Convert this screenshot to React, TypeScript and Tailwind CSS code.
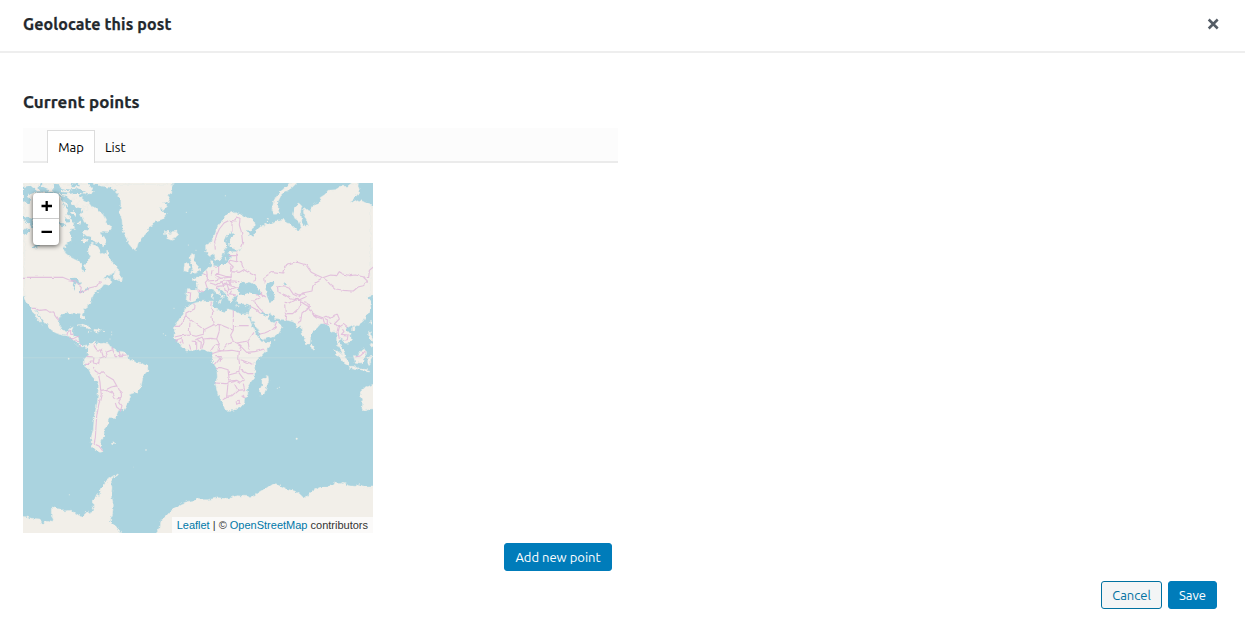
import React from 'react';

const NORTH_AMERICA =
  'M9 8 L203 8 L214 22 L220 34 L205 42 L190 38 L176 44 L190 58 L205 66 L214 78 L232 84 L240 96 L252 104 L260 118 L256 128 L272 140 L268 154 L248 152 L240 160 L256 172 L260 184 L250 196 L236 188 L222 184 L210 168 L196 166 L184 156 L198 148 L204 136 L192 124 L184 106 L170 100 L160 104 L168 118 L160 130 L164 144 L150 146 L152 160 L164 172 L150 182 L140 190 L130 206 L136 218 L150 230 L166 238 L182 246 L184 264 L190 276 L196 272 L194 252 L204 244 L210 232 L204 214 L206 200 L216 188 L230 196 L236 202 L240 216 L250 224 L262 212 L266 228 L274 242 L290 258 L296 268 L284 276 L268 284 L250 292 L254 298 L270 292 L272 304 L266 318 L252 312 L244 322 L230 332 L220 344 L214 360 L212 370 L190 388 L188 400 L193 418 L185 416 L179 398 L160 401 L140 397 L122 405 L117 420 L118 436 L125 448 L142 453 L150 443 L162 440 L158 456 L161 469 L175 472 L178 488 L188 496 L200 494 L208 502 L200 502 L180 498 L166 484 L146 468 L130 465 L108 458 L90 448 L80 432 L60 408 L50 390 L46 388 L52 403 L64 420 L66 432 L56 422 L46 406 L34 384 L20 370 L12 352 L9 346Z';
const SOUTH_AMERICA =
  'M204 502 L212 488 L228 482 L236 490 L252 488 L270 492 L276 504 L290 512 L310 514 L322 524 L324 534 L346 545 L366 547 L383 558 L384 570 L370 586 L365 610 L360 628 L348 636 L330 642 L325 664 L312 688 L296 690 L292 698 L290 706 L285 714 L265 715 L263 734 L250 750 L255 764 L243 778 L240 794 L250 814 L240 816 L225 810 L214 796 L213 774 L220 746 L223 706 L232 666 L236 612 L220 596 L205 565 L190 551 L190 536 L203 524 L208 506Z';
const GREENLAND =
  'M223 8 L240 16 L276 22 L292 38 L302 54 L303 74 L298 98 L306 118 L308 150 L316 166 L324 188 L336 202 L348 212 L354 190 L364 174 L380 158 L388 140 L398 134 L402 126 L428 116 L442 100 L424 92 L418 82 L432 88 L442 78 L430 66 L444 68 L448 54 L442 46 L454 40 L458 22 L454 8Z';
const EURASIA =
  'M1060 78 L1046 72 L1026 62 L1012 58 L992 68 L996 60 L1012 44 L1018 28 L1012 8 L992 10 L982 18 L962 18 L946 28 L924 30 L916 42 L900 52 L904 62 L882 72 L876 84 L868 92 L856 82 L850 92 L852 104 L860 122 L866 136 L856 138 L846 124 L842 92 L846 78 L836 68 L830 72 L824 88 L820 102 L824 114 L838 124 L844 140 L838 150 L830 148 L812 130 L800 128 L790 114 L784 122 L766 122 L752 130 L738 130 L724 140 L706 154 L700 174 L690 168 L686 158 L674 150 L690 150 L706 138 L704 126 L688 114 L672 108 L660 98 L650 104 L640 94 L622 102 L608 118 L592 142 L584 164 L574 184 L557 194 L557 214 L568 228 L582 218 L586 236 L598 240 L608 226 L612 208 L622 196 L614 184 L620 166 L636 154 L642 162 L628 180 L630 200 L648 208 L664 202 L648 214 L634 214 L626 218 L636 230 L624 246 L598 258 L580 256 L580 238 L572 238 L574 258 L560 266 L548 282 L535 290 L520 294 L520 300 L532 312 L533 328 L502 328 L500 346 L498 362 L510 365 L526 362 L534 350 L538 338 L552 330 L566 324 L580 328 L590 338 L606 348 L604 358 L612 348 L602 338 L594 324 L602 326 L618 342 L624 356 L632 370 L638 356 L650 346 L652 354 L646 362 L658 370 L678 370 L690 372 L690 388 L686 400 L696 420 L712 446 L720 468 L728 478 L752 470 L774 462 L788 440 L782 430 L768 422 L764 432 L752 426 L744 406 L748 398 L766 414 L800 420 L820 424 L832 440 L842 436 L848 466 L860 494 L870 490 L872 462 L888 446 L902 430 L918 430 L926 438 L932 456 L944 454 L950 466 L950 490 L962 508 L970 532 L976 528 L970 510 L956 484 L960 474 L972 480 L980 494 L994 478 L992 462 L978 446 L982 440 L996 434 L1010 438 L1030 422 L1044 400 L1052 380 L1050 360 L1060 350Z';
const AFRICA =
  'M506 376 L524 368 L546 363 L580 362 L576 374 L582 384 L600 390 L610 398 L620 386 L640 390 L664 402 L682 400 L686 410 L694 430 L704 450 L712 468 L724 484 L750 486 L750 498 L722 528 L704 546 L704 564 L704 590 L690 608 L680 624 L684 642 L674 654 L672 668 L660 682 L640 690 L616 690 L608 668 L594 640 L586 610 L592 590 L590 564 L576 542 L578 522 L564 512 L544 506 L520 510 L500 512 L484 500 L472 482 L462 470 L464 440 L478 416 L490 402 L494 388Z';
const ANTARCTICA_WEST =
  'M0 1008 L22 1010 L34 1014 L60 1016 L68 1032 L76 1022 L98 1026 L100 1014 L94 1004 L94 984 L110 982 L122 984 L130 992 L154 990 L166 1000 L188 1010 L194 998 L204 992 L208 1000 L222 994 L216 982 L224 974 L216 966 L224 956 L230 942 L238 946 L244 926 L252 914 L262 898 L280 886 L296 880 L292 886 L276 894 L270 904 L276 920 L274 948 L280 974 L278 1000 L270 1024 L290 1040 L310 1070 L0 1070Z';
const ANTARCTICA_EAST =
  'M400 1070 L420 1044 L424 1016 L436 1010 L452 992 L474 980 L482 972 L500 964 L522 960 L532 952 L542 958 L564 958 L596 952 L610 954 L628 954 L652 946 L672 948 L678 944 L690 952 L704 944 L722 932 L738 924 L752 914 L768 910 L790 924 L824 932 L840 942 L852 954 L864 946 L876 932 L902 920 L914 918 L942 916 L946 900 L956 910 L972 906 L986 916 L1006 918 L1016 912 L1030 920 L1070 920 L1070 1070Z';

const ISLANDS = [
  'M0 0H206V12H0Z M0 12H14V350H0Z M220 0H462V12H220Z M1052 76H1074V352H1052Z M994 0H1016V12H994Z',
  'M433 154 L442 152 L448 160 L458 154 L470 152 L476 160 L468 174 L454 180 L440 174 L444 168 L434 164Z',
  'M512 224 L524 222 L522 234 L524 246 L536 260 L540 272 L526 278 L510 280 L520 270 L514 266 L520 256 L512 246 L508 234Z',
  'M494 252 L506 248 L508 262 L504 272 L492 276 L492 264Z',
  'M764 102 L756 88 L760 64 L772 42 L790 26 L812 8 L832 6 L816 22 L796 34 L782 48 L774 64 L774 84 L780 100Z',
  'M282 282 L290 268 L300 278 L307 292 L306 302 L294 300 L284 296Z',
  'M152 58 L166 52 L176 62 L172 76 L158 72Z',
  'M188 76 L202 76 L204 90 L192 92Z',
  'M174 434 L188 431 L204 438 L214 446 L202 445 L190 438 L176 437Z',
  'M222 447 L238 448 L242 453 L230 456 L222 452Z',
  'M201 453 L211 454 L208 457Z M249 453 L256 453 L254 456 L249 456Z',
  'M726 598 L744 586 L746 600 L740 620 L732 642 L722 644 L718 632 L726 614Z',
  'M875 492 L882 498 L880 507 L874 504Z',
  'M940 508 L952 512 L970 526 L984 540 L986 556 L974 550 L960 532Z',
  'M984 558 L1000 558 L1016 564 L1010 568 L988 564Z M1020 566 L1030 566 L1050 570 L1048 575 L1022 571Z',
  'M1000 526 L1012 526 L1024 510 L1034 504 L1040 516 L1032 538 L1024 548 L1006 546Z',
  'M1044 530 L1060 528 L1052 536 L1052 550 L1047 556 L1044 546 L1042 538Z M1046 452 L1054 454 L1054 468 L1060 480 L1052 478 L1046 466Z',
  'M1046 494 L1060 486 L1060 498 L1054 500Z M998 440 L1006 438 L1004 450 L998 450Z M1048 424 L1054 420 L1053 434Z',
  'M1020 636 L1034 622 L1050 616 L1070 606 L1070 682 L1046 688 L1032 692 L1026 686 L1028 664 L1022 650Z',
  'M274 789 L284 787 L288 791 L276 793Z',
  'M592 364 L604 362 L602 369Z M574 342 L579 340 L580 354 L574 354Z M646 376 L658 377 L656 379Z M676 378 L684 376 L680 380Z',
  'M612 236 L617 230 L616 240Z M740 116 L746 118 L742 124Z M724 134 L732 136 L728 144Z',
];

const WATERS = [
  'M9 20 L30 16 L46 24 L62 16 L84 26 L110 22 L140 30 L170 24 L194 30 L188 38 L160 38 L140 42 L112 40 L80 38 L50 34 L24 44 L32 60 L28 74 L9 60Z',
  'M100 10 L116 12 L124 26 L108 28Z M58 8 L68 8 L64 20Z M150 8 L176 10 L180 18 L156 18Z',
  'M118 44 L136 46 L150 58 L156 74 L166 80 L184 84 L190 96 L176 104 L168 122 L160 128 L152 112 L140 104 L144 88 L132 76 L126 60Z',
  'M9 104 L28 112 L42 118 L36 132 L44 140 L36 144 L28 130 L9 118Z',
  'M9 152 L20 144 L32 148 L24 158 L10 164Z M36 202 L48 192 L58 194 L46 204Z',
  'M116 124 L132 126 L136 138 L122 136Z M134 108 L146 116 L148 130 L138 126Z',
  'M164 110 L182 108 L190 128 L204 132 L208 142 L192 156 L178 154 L166 144Z',
  'M148 154 L160 152 L158 162 L170 172 L184 172 L196 182 L208 190 L196 208 L180 200 L168 190 L156 186Z',
  'M144 294 L166 292 L182 306 L180 316 L172 306 L166 312 L162 332 L158 324 L164 306 L152 300Z',
  'M178 332 L192 330 L188 338 L178 338Z M194 326 L208 322 L204 328 L196 330Z',
  'M654 330 L658 312 L668 304 L680 312 L692 306 L702 312 L716 326 L726 340 L708 342 L690 336 L674 342 L658 344Z',
  'M735 320 L742 308 L758 304 L762 312 L752 322 L758 332 L764 350 L762 362 L748 364 L742 350 L740 338Z',
  'M720 400 L730 396 L744 404 L740 410Z M788 312 L798 306 L796 316Z',
  'M228 484 L233 484 L232 496 L228 494Z',
  'M1040 348 L1060 344 L1056 358 L1050 362Z',
];

const BORDERS = [
  // North and Central America
  'M9 291 L128 291 L146 298 L166 302 L184 322 L180 338 L198 330 L210 322 L230 318 L238 304 L246 306',
  'M36 384 L48 384 L60 390 L78 388 L90 396 L100 394 L108 406 L118 420',
  'M140 466 L144 454 L152 450 L152 462 L160 462 M148 470 L158 476 L174 468 M164 482 L178 484 M182 492 L180 500',
  // South America
  'M228 484 L222 496 L230 508 L244 510 L250 530 L238 534 L236 552 L220 548 L222 530 L200 528 M192 552 L204 552 L212 542 L222 542 M220 560 L228 576 L240 580 L246 574 L262 588 L280 598 L290 616 L274 620 L258 628 L242 630 L240 606 L236 584 M250 530 L262 526 L258 516 L278 508 L276 500 M278 508 L286 526 L300 526 L310 520 M298 512 L300 526 L320 524 M242 630 L244 642 L236 674 L230 710 L228 740 L226 772 L222 790 L238 798 L248 812 M290 616 L294 628 L304 638 L304 652 L290 656 M258 630 L280 638 L286 656 M286 668 L290 680 L302 690 L306 676 L296 664 L304 652',
  // Scandinavia and eastern Europe
  'M586 208 L584 184 L590 164 L598 146 L612 128 L628 120 L636 126 L636 154 M628 120 L646 122 L648 110 L660 114 L658 134 L664 154 L668 186 L662 200 M626 226 L646 226 L650 214 L650 244 L630 240 L626 246 L640 260 L632 270 M650 244 L664 244 L672 268 L658 276 L632 274 M672 268 L688 278 L706 286 L702 306',
  // Central Europe and the Balkans
  'M502 336 L512 338 L510 362 M532 328 L552 334 M550 280 L562 286 L562 300 L556 306 L562 324 M562 286 L560 272 M596 258 L596 282 L586 284 L602 294 L584 300 L564 302 M596 282 L616 288 L634 290 L632 258 M602 294 L618 292 L634 290 L628 300 L606 304 L590 314 L570 308 M606 304 L610 316 L594 318 L592 326 M610 316 L620 310 L632 316 L626 302 L642 302 L658 304 M610 316 L612 330 L622 334 L630 350 M620 310 L626 326 L618 332 M632 316 L656 324 L636 328 L630 340 L648 344 M626 326 L636 328 M576 270 L574 282 M584 258 L590 262',
  // Africa
  'M526 370 L524 384 L498 398 L498 408 L478 438 L464 438 M498 408 L552 448 L580 434 L576 410 L578 396 L572 380 L574 364 M580 434 L598 432 L640 450 L640 390 M640 436 L686 436 M510 424 L508 450 L512 464 L480 466 L464 470 M552 448 L550 462 L528 468 L512 464 M550 476 L570 474 L590 476 L598 452 L598 432 M508 490 L512 508 M512 482 L530 484 L530 508 M542 506 L544 486 L530 478 L546 470 L552 482 L546 504 M590 476 L598 490 L580 500 L572 512 M598 490 L594 510 L604 512 L618 496 L640 484 L632 464 L640 450 M604 512 L588 516 L576 520 M604 512 L636 510 L658 514 L662 498 L640 484 L650 488 L684 482 L702 456 M662 498 L680 516 L704 514 L734 506 M684 482 L688 508 M658 514 L656 534 L660 560 L656 576 L640 580 L626 584 L624 568 L604 562 L590 562 M594 524 L600 534 L586 552 M586 526 L604 526 L600 548 M662 538 L700 552 M658 566 L684 580 L700 580 M656 576 L672 598 L660 606 L650 600 L628 602 L626 584 M586 608 L618 610 L650 602 M624 612 L620 648 L608 660 M620 648 L636 646 L654 630 L644 612 M654 630 L674 628 L670 610 M648 662 L658 660 L658 668 L650 672Z M666 648 L670 642 L672 652Z M466 480 L484 474 L490 490 M478 490 L484 484',
  // Middle East
  'M690 362 L706 362 L716 382 L730 396 M690 378 L706 386 L722 400 M716 462 L734 458 L756 448 L770 438 M770 424 L762 444 M706 360 L720 352 L708 342 M720 342 L738 350 M728 350 L724 338 M794 372 L796 398 L800 408 L798 420 M794 366 L810 368 L828 358 L842 360 M800 400 L818 400 L836 384 L842 364 L868 380 L846 398 L842 422 L832 428',
  // Central Asia
  'M736 306 L734 290 L758 274 L788 278 L794 258 L812 252 L832 246 L858 254 L874 276 L890 284 L908 292 L888 304 L878 318 L876 332 L848 338 L836 350 L820 342 L808 324 L788 316 L772 320 L774 334 M908 292 L932 284 L950 286 L958 274 L968 280 L990 286 L1006 284 L1032 290 L1046 288 L1048 270 L1060 260 M908 292 L920 300 L930 312 L948 326 L970 330 L1000 332 L1014 320 L1030 316 L1044 304 L1030 290 M772 334 L796 344 L814 356 L832 358 M824 338 L836 344 L852 340 L856 350 L836 360 L826 354',
  // South and South-East Asia
  'M842 362 L858 366 L868 372 L866 390 L876 396 L886 404 L908 412 L918 408 L930 414 L944 404 L952 402 L958 416 L946 428 L958 440 L954 456 L958 476 M908 412 L912 428 L922 432 L922 418 L912 414 M958 440 L970 432 L982 442 M966 444 L972 454 L964 462 L984 464 L982 478 L972 480 M1006 530 L1022 526 L1034 514 M876 400 L890 410 L908 416 M926 422 L936 430',
];

const SPECKS: Array<[number, number, number]> = [
  [146, 535, 2.5], [830, 775, 3], [378, 809, 2.5], [505, 194, 1.5], [528, 210, 1.5], [499, 96, 1.5],
  [616, 46, 1.5], [430, 460, 1.5], [437, 465, 1.5], [462, 384, 1.5], [764, 479, 2], [772, 624, 1.5],
  [778, 621, 1.5], [275, 455, 1.5], [275, 463, 1.5], [270, 476, 1.5], [340, 860, 1], [148, 943, 1.5],
];

function WorldMap() {
  return (
    <svg viewBox="9 8 1050 1050" className="block size-[350px] bg-[#aad3df]" aria-hidden="true">
      <defs>
        <filter id="coast" filterUnits="userSpaceOnUse" x="-10" y="-10" width="1090" height="1090" colorInterpolationFilters="sRGB">
          <feTurbulence type="fractalNoise" baseFrequency="0.09" numOctaves="2" seed="4" />
          <feDisplacementMap in="SourceGraphic" scale="13" xChannelSelector="R" yChannelSelector="G" />
        </filter>
        <filter id="frontier" filterUnits="userSpaceOnUse" x="-10" y="-10" width="1090" height="1090" colorInterpolationFilters="sRGB">
          <feTurbulence type="fractalNoise" baseFrequency="0.05" numOctaves="2" seed="7" />
          <feDisplacementMap in="SourceGraphic" scale="9" xChannelSelector="R" yChannelSelector="G" />
        </filter>
      </defs>
      <g filter="url(#coast)">
        <g fill="#f2efe9" stroke="#e5eae6" strokeWidth="1.5" strokeLinejoin="round">
          {[NORTH_AMERICA, SOUTH_AMERICA, GREENLAND, EURASIA, AFRICA, ANTARCTICA_WEST, ANTARCTICA_EAST, ...ISLANDS].map((d) => (
            <path key={d} d={d} />
          ))}
        </g>
        <g fill="#aad3df">
          {WATERS.map((d) => (
            <path key={d} d={d} />
          ))}
        </g>
        <path
          fill="#f2efe9"
          d="M44 22l12 4 8 8-14-2Z M78 28l14-4 10 8-14 4Z M126 28l16 4 14-3-8 8-22-2Z M130 60l12 8 2 14-10-6Z M154 92l14 4-2 12-12-6Z M184 178l14-3 6 8-12 4Z M174 122l9 3-2 8-8-3Z"
        />
      </g>
      <g fill="#eef0e8">
        {SPECKS.map(([x, y, r]) => (
          <circle key={`${x}-${y}`} cx={x} cy={y} r={r} />
        ))}
      </g>
      <g fill="none" stroke="#dfb9da" strokeWidth="3.3" strokeOpacity="0.85" strokeLinejoin="round" filter="url(#frontier)">
        {BORDERS.map((d) => (
          <path key={d} d={d} />
        ))}
      </g>
      <path d="M9 532.5H1059" stroke="#d5e1df" strokeWidth="2" strokeOpacity="0.5" />
    </svg>
  );
}

export default function App() {
  return (
    <div className="flex h-[632px] flex-col bg-white font-['Ubuntu','Noto_Sans',sans-serif] text-[13px] text-[#23282d]">
      <header className="flex h-[53px] shrink-0 items-center justify-between border-b-2 border-[#eeeeee] pr-[26px] pb-[3px] pl-[23px]">
        <h1 className="text-[16px] font-bold tracking-[0.13px] [-webkit-text-stroke:0.25px]">Geolocate this post</h1>
        <button type="button" aria-label="Close" className="text-[#555d66]">
          <svg viewBox="0 0 12 12" className="block size-3">
            <path d="M1.7 1.5L10.7 10.5M10.7 1.5L1.7 10.5" stroke="currentColor" strokeWidth="2.5" />
          </svg>
        </button>
      </header>

      <main className="flex w-[618px] flex-col pt-[38px] pl-[23px]">
        <h2 className="h-[22px] text-[16.9px] leading-[22px] font-bold tracking-[0.1px] [-webkit-text-stroke:0.25px]">Current points</h2>
        <div className="mt-[15px] flex h-[35px] items-end border-b-2 border-[#ebebeb] bg-[#fcfcfc] pl-6 text-black">
          <button type="button" className="-mb-[2px] h-[33px] w-12 border border-b-0 border-[#dcdcdc] bg-white pt-[2px]">Map</button>
          <button type="button" className="-mb-[2px] h-[33px] px-[10px] pt-[2px]">List</button>
        </div>

        <div className="relative mt-[20px] size-[350px]">
          <WorldMap />
          <div className="absolute top-[10px] left-[10px] w-[26px] overflow-hidden rounded-[4px] bg-white text-black shadow-[0_1px_5px_rgba(0,0,0,0.65)]">
            <button type="button" aria-label="Zoom in" className="flex h-[26px] w-full items-center justify-center border-b border-[#ccc]">
              <svg viewBox="0 0 12 12" className="size-3"><path d="M1.5 6H12M6.7 1V11" stroke="currentColor" strokeWidth="2.3" /></svg>
            </button>
            <button type="button" aria-label="Zoom out" className="flex h-[26px] w-full items-center justify-center">
              <svg viewBox="0 0 12 12" className="size-3"><path d="M1.5 5.8H12" stroke="currentColor" strokeWidth="2.3" /></svg>
            </button>
          </div>
          <div className="absolute right-0 bottom-0 h-4 bg-white/70 px-[5px] font-['Liberation_Sans',sans-serif] text-[11px] leading-4 whitespace-nowrap text-[#333]">
            <a className="text-[#0078a8]">Leaflet</a> | © <a className="text-[#0078a8]">OpenStreetMap</a> contributors
          </div>
        </div>

        <div className="mt-[10px] flex justify-end pr-[6px]">
          <button type="button" className="h-7 w-[108px] rounded-[3px] border border-[#007cba] bg-[#007cba] pt-[2px] text-white">Add new point</button>
        </div>
      </main>

      <footer className="mt-[10px] flex justify-end gap-[6px] pr-7">
        <button type="button" className="h-7 w-[61px] rounded-[3px] border border-[#0071a1] bg-[#f3f5f6] pt-[2px] text-[#0071a1]">Cancel</button>
        <button type="button" className="h-7 w-[49px] rounded-[3px] border border-[#007cba] bg-[#007cba] pt-[2px] text-white">Save</button>
      </footer>
    </div>
  );
}
